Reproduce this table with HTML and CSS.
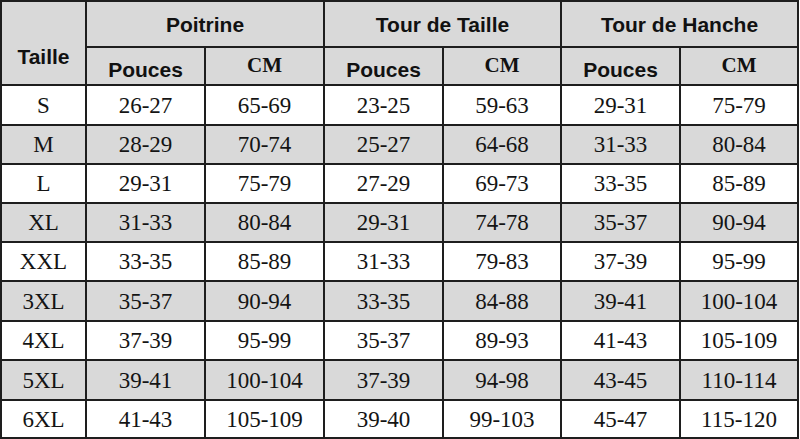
FILE: index.html
```html
<!DOCTYPE html>
<html lang="fr">
<head>
<meta charset="utf-8">
<title>Guide des tailles</title>
<link rel="stylesheet" href="styles.css">
</head>
<body>
<table class="size-table">
  <colgroup>
    <col class="c-size">
    <col class="c-val"><col class="c-val">
    <col class="c-val"><col class="c-narrow">
    <col class="c-val"><col class="c-narrow">
  </colgroup>
  <thead>
    <tr class="head-top">
      <th class="th-size" rowspan="2">Taille</th>
      <th colspan="2">Poitrine</th>
      <th colspan="2">Tour de Taille</th>
      <th colspan="2">Tour de Hanche</th>
    </tr>
    <tr class="head-sub">
      <th class="th-in">Pouces</th><th class="th-cm">CM</th>
      <th class="th-in">Pouces</th><th class="th-cm">CM</th>
      <th class="th-in">Pouces</th><th class="th-cm">CM</th>
    </tr>
  </thead>
  <tbody>
    <tr class="r1"><td>S</td><td>26-27</td><td>65-69</td><td>23-25</td><td>59-63</td><td>29-31</td><td>75-79</td></tr>
    <tr class="r2 alt"><td>M</td><td>28-29</td><td>70-74</td><td>25-27</td><td>64-68</td><td>31-33</td><td>80-84</td></tr>
    <tr class="r3"><td>L</td><td>29-31</td><td>75-79</td><td>27-29</td><td>69-73</td><td>33-35</td><td>85-89</td></tr>
    <tr class="r4 alt"><td>XL</td><td>31-33</td><td>80-84</td><td>29-31</td><td>74-78</td><td>35-37</td><td>90-94</td></tr>
    <tr class="r5"><td>XXL</td><td>33-35</td><td>85-89</td><td>31-33</td><td>79-83</td><td>37-39</td><td>95-99</td></tr>
    <tr class="r6 alt"><td>3XL</td><td>35-37</td><td>90-94</td><td>33-35</td><td>84-88</td><td>39-41</td><td>100-104</td></tr>
    <tr class="r7"><td>4XL</td><td>37-39</td><td>95-99</td><td>35-37</td><td>89-93</td><td>41-43</td><td>105-109</td></tr>
    <tr class="r8 alt"><td>5XL</td><td>39-41</td><td>100-104</td><td>37-39</td><td>94-98</td><td>43-45</td><td>110-114</td></tr>
    <tr class="r9"><td>6XL</td><td>41-43</td><td>105-109</td><td>39-40</td><td>99-103</td><td>45-47</td><td>115-120</td></tr>
  </tbody>
</table>
</body>
</html>
```

FILE: styles.css
```css
html, body {
  margin: 0;
  padding: 0;
  background: #ffffff;
}

.size-table {
  border-collapse: collapse;
  table-layout: fixed;
  width: 799px;
  font-family: "Liberation Serif", "Times New Roman", serif;
  color: #141414;
}

.c-size { width: 85px; }
.c-val { width: 119px; }
.c-narrow { width: 118px; }

.size-table th,
.size-table td {
  border: 2px solid #1e1e1e;
  padding: 0;
  text-align: center;
  vertical-align: middle;
  line-height: 1;
}

.size-table th {
  background: #d9d9d9;
  font-family: "Liberation Sans", Arial, sans-serif;
  font-weight: bold;
  font-size: 21px;
  color: #111;
}

.head-top { height: 46px; }
.head-sub { height: 38px; }

.size-table .th-size {
  vertical-align: bottom;
  padding-bottom: 17px;
}

.size-table .th-in {
  vertical-align: bottom;
  padding-bottom: 4px;
}

.size-table .th-cm {
  font-family: "Liberation Serif", "Times New Roman", serif;
  font-size: 21px;
  padding-bottom: 2px;
}

.size-table td {
  font-size: 23px;
  height: 37px;
}

.size-table tr.alt td {
  background: #d9d9d9;
}

.r1 td, .r6 td, .r8 td { height: 38px; }
.r9 td { height: 36px; }
```
